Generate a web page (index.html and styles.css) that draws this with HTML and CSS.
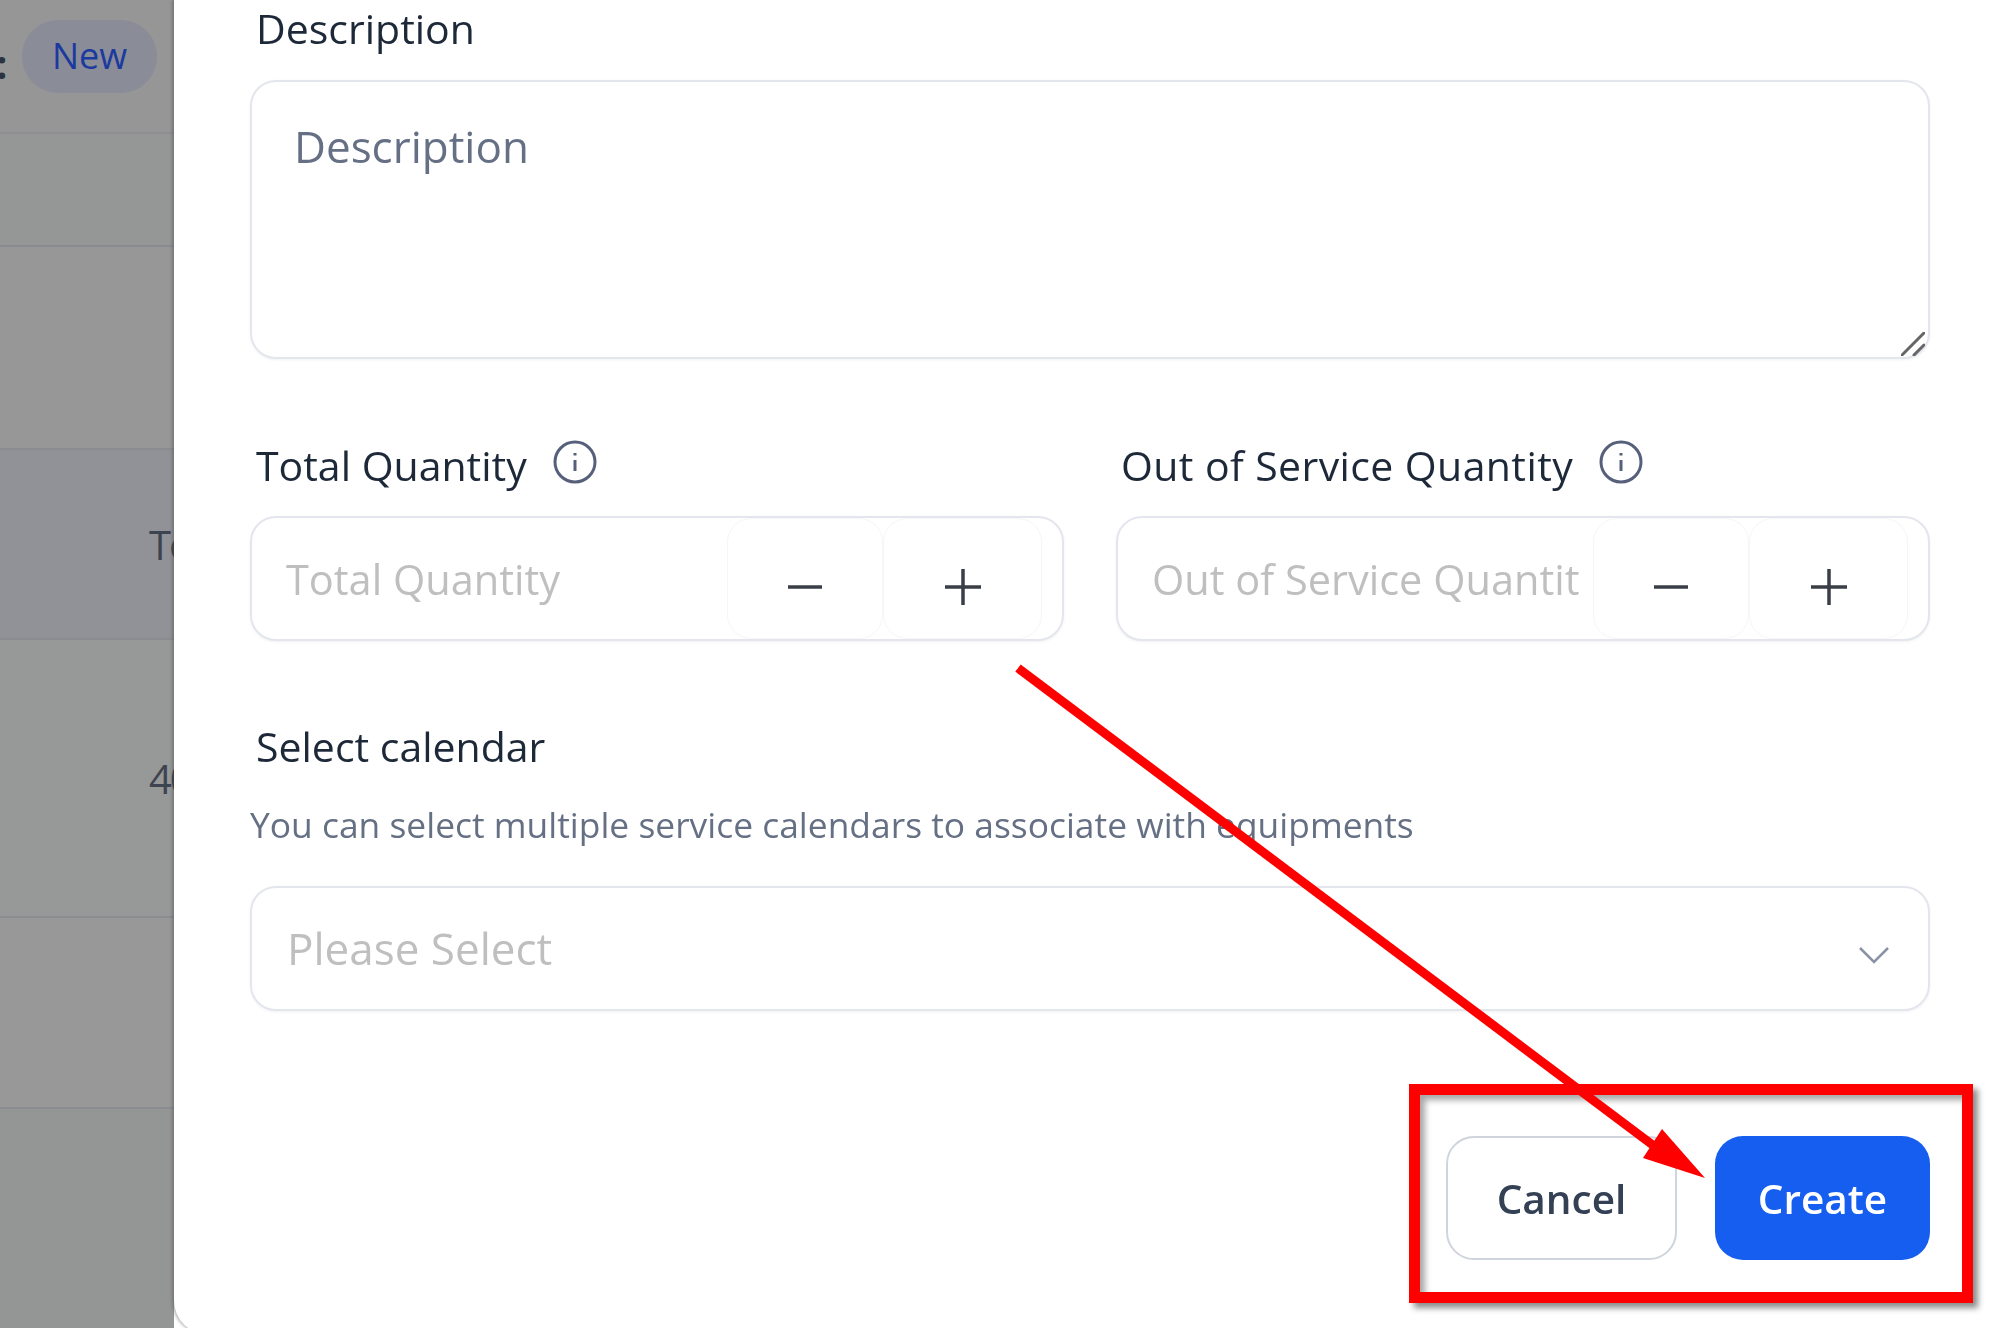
FILE: index.html
```html
<!DOCTYPE html>
<html lang="en">
<head>
<meta charset="utf-8">
<title>Create equipment</title>
<link rel="stylesheet" href="styles.css">
</head>
<body>
<div class="page">
  <aside class="backdrop">
    <div class="row row-head"><span class="colon">:</span><span class="pill">New</span></div>
    <div class="row row-b"></div>
    <div class="row row-c"></div>
    <div class="row row-d"><span class="cell-text">Total</span></div>
    <div class="row row-e"><span class="cell-text">40</span></div>
    <div class="row row-f"></div>
    <div class="row row-g"></div>
  </aside>
  <main class="modal">
    <div class="label">Description</div>
    <div class="textarea">
      <span class="ph-dark">Description</span>
      <svg class="grip" viewBox="0 0 24 24" aria-hidden="true"><path d="M1 23 23 1M13 23 23 13"/></svg>
    </div>
    <div class="qty-grid">
      <div class="qty">
        <div class="label label-icon">Total Quantity
          <svg class="info" viewBox="0 0 44 44" aria-hidden="true"><circle cx="22" cy="22" r="20"/><path d="M22 20v11M22 13v2.500"/></svg>
        </div>
        <div class="stepper">
          <span class="stepper-field">Total Quantity</span>
          <span class="step step-minus"><svg viewBox="0 0 38 38" aria-hidden="true"><path d="M2 19h34"/></svg></span>
          <span class="step step-plus"><svg viewBox="0 0 38 38" aria-hidden="true"><path d="M1 19h36M19 1v36"/></svg></span>
        </div>
      </div>
      <div class="qty">
        <div class="label label-icon label-wide">Out of Service Quantity
          <svg class="info" viewBox="0 0 44 44" aria-hidden="true"><circle cx="22" cy="22" r="20"/><path d="M22 20v11M22 13v2.500"/></svg>
        </div>
        <div class="stepper">
          <span class="stepper-field">Out of Service Quantity</span>
          <span class="step step-minus"><svg viewBox="0 0 38 38" aria-hidden="true"><path d="M2 19h34"/></svg></span>
          <span class="step step-plus"><svg viewBox="0 0 38 38" aria-hidden="true"><path d="M1 19h36M19 1v36"/></svg></span>
        </div>
      </div>
    </div>
    <div class="label label-calendar">Select calendar</div>
    <p class="help">You can select multiple service calendars to associate with equipments</p>
    <div class="select">
      <span class="select-text">Please Select</span>
      <svg class="chevron" viewBox="0 0 32 18" aria-hidden="true"><path d="M2 2 16 16 30 2"/></svg>
    </div>
    <div class="actions">
      <button class="btn btn-cancel" type="button">Cancel</button>
      <button class="btn btn-create" type="button">Create</button>
    </div>
  </main>
  <div class="highlight"></div>
  <svg class="arrow" viewBox="0 0 2000 1328" aria-hidden="true">
    <path class="arrow-shaft" d="M1018 668 1662 1152"/>
    <path class="arrow-head" d="M1662 1129 1643 1158 1705 1178Z"/>
  </svg>
</div>
</body>
</html>
```
FILE: styles.css
```css
* { box-sizing: border-box; }
html, body { margin: 0; height: 100%; }
body { font-family: "Open Sans", "Noto Sans", sans-serif; background: #fff; }

.page {
  position: relative;
  display: flex;
  width: 2000px;
  height: 1328px;
  overflow: hidden;
  filter: blur(.5px);
}

.backdrop {
  flex: 0 0 174px;
  min-width: 0;
  display: flex;
  flex-direction: column;
  overflow: hidden;
  background: #969797;
  color: #3d4450;
}
.row {
  display: flex;
  flex: none;
  align-items: center;
  border-bottom: 2px solid #8b8c90;
  overflow: hidden;
  white-space: nowrap;
}
.row-head { height: 134px; padding-bottom: 20px; background: #959695; border-bottom-color: #8d8d92; }
.row-b { height: 113px; background: #959696; }
.row-c { height: 203px; background: #979797; }
.row-d { height: 190px; background: #919297; padding-left: 149px; }
.row-e { height: 278px; background: #979898; padding-left: 149px; }
.row-f { height: 191px; background: #989898; }
.row-g { flex: 1; background: #949695; border-bottom: 0; }
.colon { flex: none; width: 18px; margin-left: -4px; font-size: 40px; font-weight: 700; color: #2c3340; padding-top: 14px; }
.pill {
  display: flex;
  flex: none;
  align-items: center;
  justify-content: center;
  width: 135px;
  height: 73px;
  margin-left: 8px;
  padding-bottom: 2px;
  border-radius: 36px;
  background: #8a8d98;
  color: #1a3aa0;
  font-size: 36px;
}
.cell-text { flex: none; font-size: 40px; letter-spacing: -2px; }

.modal {
  flex: 1;
  min-width: 0;
  height: 1335px;
  padding: 0 70px 0 76px;
  background: #fff;
  border-bottom-left-radius: 35px;
  box-shadow: -2px 0 3px rgba(60, 60, 60, .35);
  position: relative;
}

.label {
  height: 58px;
  line-height: 56px;
  padding-left: 6px;
  font-size: 41px;
  color: #1d2939;
  white-space: nowrap;
}
.label-icon { display: flex; align-items: center; gap: 26px; margin-top: -1px; margin-bottom: 1px; }
.label-wide { letter-spacing: .4px; padding-left: 5px; }
.label-calendar { margin-top: 76px; line-height: 58px; }

.info { width: 44px; height: 44px; margin-top: -6px; fill: none; stroke: #56607a; stroke-width: 3; }

.textarea {
  position: relative;
  height: 279px;
  margin-top: 22px;
  padding: 35px 42px;
  border: 2px solid #e4e6ed;
  border-radius: 26px;
  box-shadow: 0 1px 3px rgba(16, 24, 40, .06);
}
.ph-dark { font-size: 44px; line-height: 58px; color: #667085; }
.grip {
  position: absolute;
  right: 3px;
  bottom: 1px;
  width: 24px;
  height: 24px;
  fill: none;
  stroke: #666;
  stroke-width: 3;
  stroke-linecap: round;
}

.qty-grid {
  display: grid;
  grid-template-columns: minmax(0, 1fr) minmax(0, 1fr);
  gap: 52px;
  margin-top: 78px;
}
.stepper {
  display: flex;
  height: 125px;
  margin-top: 22px;
  padding-right: 20px;
  border: 2px solid #e4e6ed;
  border-radius: 26px;
  box-shadow: 0 1px 3px rgba(16, 24, 40, .06);
}
.stepper-field {
  flex: 1;
  min-width: 0;
  margin: 0 14px 0 34px;
  overflow: hidden;
  white-space: nowrap;
  line-height: 122px;
  font-size: 41.500px;
  color: #bfbfbf;
}
.step {
  display: flex;
  align-items: center;
  justify-content: center;
  border: 1px solid #f6f6f8;
  border-radius: 24px;
  padding-top: 16px;
}
.step-minus { flex: 0 0 156px; }
.step-plus { flex: 0 0 159px; }
.step svg { width: 38px; height: 38px; fill: none; stroke: #3a3f47; stroke-width: 3.500; }

.help {
  height: 50px;
  margin: 24px 0 0;
  line-height: 50px;
  font-size: 35.400px;
  color: #667085;
  white-space: nowrap;
}

.select {
  display: flex;
  align-items: center;
  justify-content: space-between;
  height: 125px;
  margin-top: 37px;
  padding: 0 38px 0 35px;
  border: 2px solid #e4e6ed;
  border-radius: 26px;
  box-shadow: 0 1px 3px rgba(16, 24, 40, .06);
  font-size: 44px;
  color: #bfbfbf;
}
.select-text { padding-bottom: 2px; }
.chevron { width: 32px; height: 18px; margin-top: 12px; fill: none; stroke: #8a93a6; stroke-width: 2.500; }

.actions {
  display: flex;
  justify-content: flex-end;
  gap: 38px;
  margin-top: 125px;
}
.btn {
  height: 124px;
  border-radius: 28px;
  font-family: inherit;
  font-size: 40.500px;
  font-weight: 600;
  padding: 0;
}
.btn-cancel { width: 231px; background: #fff; border: 2px solid #d0d5dd; color: #344054; }
.btn-create { width: 215px; background: #155eef; border: 0; color: #fff; }

.highlight {
  position: absolute;
  left: 1409px;
  top: 1084px;
  width: 564px;
  height: 219px;
  border: 11px solid #f00;
  box-shadow: 5px 5px 6px rgba(0, 0, 0, .45), inset 5px 5px 6px rgba(0, 0, 0, .35);
}

.arrow {
  position: absolute;
  inset: 0;
  width: 2000px;
  height: 1328px;
  pointer-events: none;
}
.arrow-shaft { fill: none; stroke: #f00; stroke-width: 9; }
.arrow-head { fill: #f00; }
```
